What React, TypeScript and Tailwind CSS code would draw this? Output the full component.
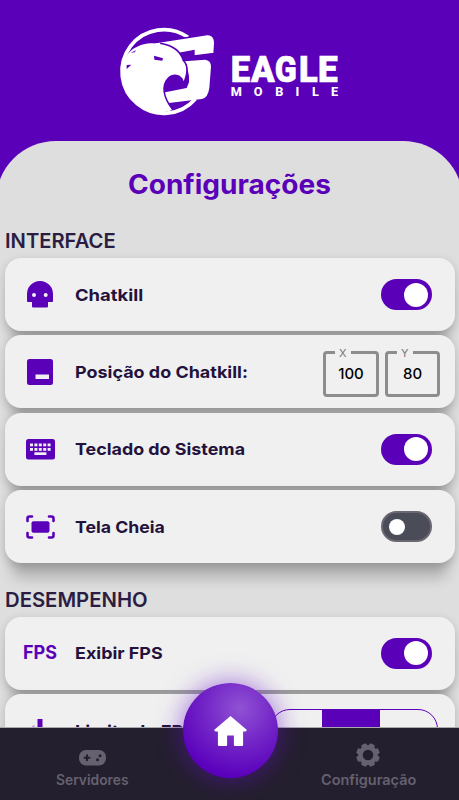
import { useLayoutEffect, useRef, type ReactNode } from "react";

/* Text stretched horizontally so that it fills a given width. */
function Fit({ width, className = "", children }: { width: number; className?: string; children: ReactNode }) {
  const ref = useRef<HTMLSpanElement>(null);
  useLayoutEffect(() => {
    const el = ref.current;
    if (el) el.style.transform = `scaleX(${width / el.offsetWidth})`;
  }, [width]);
  return (
    <span className="block shrink-0" style={{ width }}>
      <span ref={ref} className={`inline-block origin-left whitespace-nowrap ${className}`}>
        {children}
      </span>
    </span>
  );
}

const HEAD =
  "M12 112 C22 75 70 50 120 60 C158 66 181 85 188 111 C201 122 202 146 191 172 C187 152 160 143 143 161 C121 184 127 220 156 258 C90 285 4 225 6 140 Z";

function Logo() {
  return (
    <svg width="240" height="100" viewBox="0 0 720 300" className="block">
      <g transform="translate(30 12)">
        <path d="M204 40 A125.500 125.500 0 1 0 226 225" fill="none" stroke="#fff" strokeWidth="11" />
        <path d="M98 57 L252 33 Q284 27 284 58 L282 88 L222 96 L222 80 L160 91 Z" fill="#fff" stroke="#5a00b8" strokeWidth="4" />
        <path
          d="M184 114 L194 112 L255 107 Q273 109 273 128 L268 192 Q264 221 246 225 L140 238 L128 206 L200 192 L207 175 L207 157 L200 120 Z"
          fill="#fff"
        />
        <path d="M120 60 C158 66 181 85 188 111 C201 122 202 146 191 172 C187 152 160 143 143 161 C121 184 127 220 156 258" fill="none" stroke="#5a00b8" strokeWidth="9" />
        <path d={HEAD} fill="#fff" />
        <path d="M102 95 L129 103 L127 110 L103 107 Z M32 86 L48 79 L44 85 Z M20 123 L34 122 L20 135 Z" fill="#5a00b8" />
      </g>
      <g fill="#fff" stroke="#fff" strokeWidth="2" fontFamily="Roboto, sans-serif" fontWeight="900" fontSize="112">
        <text x="362" y="187" textLength="58" lengthAdjust="spacingAndGlyphs">E</text>
        <text x="423" y="187" textLength="71" lengthAdjust="spacingAndGlyphs">A</text>
        <text x="494" y="187" textLength="66" lengthAdjust="spacingAndGlyphs">G</text>
        <text x="567" y="187" textLength="56" lengthAdjust="spacingAndGlyphs">L</text>
        <text x="624" y="187" textLength="59" lengthAdjust="spacingAndGlyphs">E</text>
      </g>
      <g fill="#fff" fontFamily="Roboto, sans-serif" fontWeight="800" fontSize="38" textAnchor="middle">
        <text x="379" y="227">M</text>
        <text x="444" y="227">O</text>
        <text x="508" y="227">B</text>
        <text x="562" y="227">I</text>
        <text x="616" y="227">L</text>
        <text x="674" y="227">E</text>
      </g>
    </svg>
  );
}

function Skull() {
  return (
    <svg width="26" height="27" viewBox="0 0 26 27" className="block">
      <path fillRule="evenodd" fill="#5a00b8" d="M0 20V13a13 13 0 0 1 26 0v7q0 1-1 1h-4v4.500q0 1-1 1H6q-1 0-1-1V21H1q-1 0-1-1ZM7 12a2 2 0 1 0 0 4a2 2 0 0 0 0-4Zm11.700 0a2 2 0 1 0 0 4a2 2 0 0 0 0-4Z" />
    </svg>
  );
}

function Position() {
  return (
    <svg width="26" height="26" viewBox="0 0 26 26" className="block">
      <rect width="26" height="26" rx="2.500" fill="#5a00b8" />
      <rect x="8.500" y="15.500" width="13.500" height="4.500" fill="#f0f0f0" />
    </svg>
  );
}

function Keyboard() {
  return (
    <svg width="29" height="21" viewBox="0 0 29 21" className="block">
      <rect width="29" height="20.500" rx="2.500" fill="#5a00b8" />
      <g fill="#f0f0f0">
        {[4, 8.4, 12.800, 17.200, 21.600].map((x) => (
          <g key={x}>
            <rect x={x} y="4.500" width="3" height="2.800" />
            <rect x={x} y="9" width="3" height="2.800" />
          </g>
        ))}
        <rect x="8.400" y="13.300" width="12" height="2.700" />
      </g>
    </svg>
  );
}

function Fullscreen() {
  return (
    <svg width="29" height="24" viewBox="0 0 29 24" className="block">
      <rect x="5.500" y="6.300" width="18" height="11.500" rx="2" fill="#5a00b8" />
      <path d="M1.500 6V3.500q0-2 2-2H6M23 1.500h2.500q2 0 2 2V6M27.500 18v2.500q0 2-2 2H23M6 22.500H3.500q-2 0-2-2V18" fill="none" stroke="#5a00b8" strokeWidth="2.600" strokeLinecap="round" />
    </svg>
  );
}

function Toggle({ on }: { on?: boolean }) {
  return on ? (
    <span className="flex h-[31px] w-[51px] items-center justify-end rounded-full bg-[#5a00b8] pr-[4px]">
      <span className="size-6 rounded-full bg-white" />
    </span>
  ) : (
    <span className="flex h-[31px] w-[51px] items-center rounded-full border-2 border-[#6b6672] bg-[#4a4c57] pl-[5.500px]">
      <span className="size-4 rounded-full bg-white" />
    </span>
  );
}

function Coordinate({ label, value, width }: { label: string; value: string; width: number }) {
  return (
    <fieldset className="-mt-[4px] h-[51px] min-w-0 rounded-[4px] border-[3px] border-[#8d8d8d] font-[Inter,sans-serif]" style={{ width }}>
      <legend className="ml-[9px] h-[12px] w-4 pl-[4px] text-left text-[11px] leading-[14px] text-[#777]">{label}</legend>
      <span className="block text-center text-[15px] leading-[31px] font-medium text-black">{value}</span>
    </fieldset>
  );
}

function Card({ icon, label, width, children }: { icon: ReactNode; label: string; width: number; children: ReactNode }) {
  return (
    <div className="relative flex h-[73px] shrink-0 items-center rounded-[16px] bg-[#f0f0f0] pr-[23px] shadow-[0_22px_14px_-7px_rgba(0,0,0,0.2),0_3px_10px_rgba(0,0,0,0.18)]">
      <span className="flex w-[70px] justify-center">{icon}</span>
      <Fit width={width} className="pt-px text-[16.500px] font-bold text-[#24123d]">{label}</Fit>
      <span className="ml-auto flex">{children}</span>
    </div>
  );
}

function Gamepad() {
  return (
    <svg width="27" height="16" viewBox="0 0 27 16" className="block">
      <rect width="27" height="15.500" rx="7" fill="#66616f" />
      <path d="M8 4.500v6.500M4.800 7.700h6.500" stroke="#241f2e" strokeWidth="2" />
      <circle cx="18.500" cy="9.800" r="1.500" fill="#241f2e" />
      <circle cx="21" cy="5.700" r="1.500" fill="#241f2e" />
    </svg>
  );
}

function Gear() {
  return (
    <svg width="24" height="24" viewBox="-12 -12 24 24" className="block">
      <g fill="#66616f">
        {[22.5, 67.5, 112.5, 157.5, 202.5, 247.5, 292.5, 337.5].map((a) => (
          <rect key={a} x="-2.900" y="-11.800" width="5.800" height="6" rx="1.500" transform={`rotate(${a})`} />
        ))}
      </g>
      <circle r="7.600" fill="none" stroke="#66616f" strokeWidth="4.600" />
    </svg>
  );
}

export default function App() {
  return (
    <div className="flex h-[800px] w-[459px] flex-col overflow-hidden bg-[#5a00b8] font-[Inter,sans-serif]">
      <header className="h-[141px] shrink-0 pt-[20px] pl-[110px]">
        <Logo />
      </header>

      <main className="h-[586px] shrink-0 overflow-hidden">
        <div className="-mx-1 flex h-[720px] flex-col rounded-t-[60px] bg-[#dedede] px-[9px]">
          <h1 className="flex h-[86px] justify-center pr-px text-[26.500px] leading-[86px] font-bold text-[#5a00b8]">
            <Fit width={203}>Configurações</Fit>
          </h1>
          <h2 className="h-[31px] pt-[2px] text-[20px] leading-[25px] font-semibold text-[#2b1d42]">
            <Fit width={111}>INTERFACE</Fit>
          </h2>
          <section className="flex w-[450px] flex-col gap-[4.400px]">
            <Card icon={<Skull />} label="Chatkill" width={68}><Toggle on /></Card>
            <Card icon={<Position />} label="Posição do Chatkill:" width={173}>
              <span className="-mr-[8px] flex gap-[6px] pt-[4px]">
                <Coordinate label="X" value="100" width={56} />
                <Coordinate label="Y" value="80" width={55} />
              </span>
            </Card>
            <Card icon={<Keyboard />} label="Teclado do Sistema" width={170}><Toggle on /></Card>
            <Card icon={<Fullscreen />} label="Tela Cheia" width={90}><Toggle /></Card>
          </section>
          <h2 className="relative mt-[23px] h-[30.500px] pt-[1.500px] text-[20px] leading-[25px] font-semibold text-[#2b1d42]">
            <Fit width={143}>DESEMPENHO</Fit>
          </h2>
          <section className="flex w-[450px] flex-col gap-[4.400px]">
            <Card
              icon={<Fit width={34} className="text-[18.500px] font-bold text-[#5a00b8]">FPS</Fit>}
              label="Exibir FPS"
              width={88}
            >
              <Toggle on />
            </Card>
            <Card
              icon={
                <svg width="28" height="28" viewBox="0 0 28 28" className="block">
                  <path d="M14 2v18M21 14v6M3 23h22" fill="none" stroke="#5a00b8" strokeWidth="5" />
                  <path d="M6 8.500h3v9h-3z" fill="#c9a8e8" />
                </svg>
              }
              label="Limite de FPS"
              width={120}
            >
              <span className="-mr-[6px] mt-[3px] flex h-[46px] w-[168px] overflow-hidden rounded-[20px] border border-[#5a00b8] text-[14px] leading-[47px] text-[#5a00b8]">
                <span className="w-[51px] text-center">30</span>
                <span className="w-[58px] bg-[#5a00b8] text-center text-white">60</span>
                <span className="flex-1 text-center">90</span>
              </span>
            </Card>
          </section>
        </div>
      </main>

      <nav className="relative flex h-[73px] shrink-0 justify-between border-t border-[#aaa7ad] bg-[#241f2e] px-[43px] text-[14px] leading-[18px] font-semibold text-[#66616f]">
        <a className="flex w-[98px] flex-col items-center pt-[22px]">
          <Gamepad />
          <span className="mt-[5px]"><Fit width={73}>Servidores</Fit></span>
        </a>
        <a className="flex w-[96px] flex-col items-center pt-[15px]">
          <Gear />
          <span className="mt-[4px]"><Fit width={95}>Configuração</Fit></span>
        </a>
        <button className="absolute top-[-45px] left-[183px] flex size-[95px] items-center justify-center rounded-full bg-[radial-gradient(circle_at_60%_27%,#9052d4_0%,#7427c7_38%,#5a00bc_76%)] pt-px shadow-[0_0_24px_2px_rgba(100,15,200,0.500)]">
          <svg width="33" height="31" viewBox="0 0 34 32" className="block">
            <path d="M17 0 34 14.500 32.500 16H30V30q0 1-1 1H21.500q-1 0-1-1V20H13.500V30q0 1-1 1H5q-1 0-1-1V16H1.500L0 14.500Z" fill="#fff" />
          </svg>
        </button>
      </nav>
    </div>
  );
}
